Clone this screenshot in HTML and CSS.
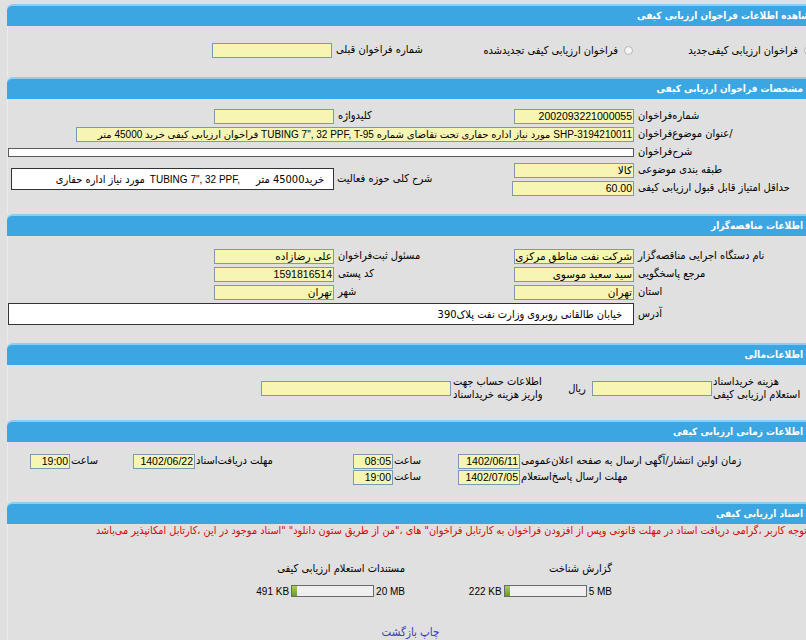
FILE: index.html
```html
<!DOCTYPE html>
<html lang="fa">
<head>
<meta charset="utf-8">
<title>مشاهده اطلاعات فراخوان ارزيابی کيفی</title>
<link rel="stylesheet" href="styles.css">
</head>
<body>
<div class="page">
  <div class="bar bar-main">مشاهده اطلاعات فراخوان ارزيابی کيفی</div>
  <div class="sec sec-top">
    <div class="top-row">
      <div class="opt"><span class="radio"></span><span>فراخوان ارزيابی کيفی‌جديد</span></div>
      <div class="mid">
        <div class="opt"><span class="radio"></span><span>فراخوان ارزيابی کيفی تجديدشده</span></div>
        <span class="lbl">شماره فراخوان قبلی</span>
      </div>
      <div class="cell"><div class="in w120"></div></div>
    </div>
  </div>

  <div class="bar">مشخصات فراخوان ارزيابی کيفی</div>
  <div class="sec sec-spec grid">
    <div class="lbl">شماره‌فراخوان</div>
    <div class="cell"><div class="in num w120">2002093221000055</div></div>
    <div class="lbl">کليدواژه</div>
    <div class="cell"><div class="in w120"></div></div>
    <div></div>

    <div class="lbl">/عنوان موضوع‌فراخوان</div>
    <div class="cell span"><div class="in wtitle">SHP-3194210011 مورد نياز اداره حفاری تحت تقاضای شماره TUBING 7", 32 PPF, T-95 فراخوان ارزيابی کيفی خريد 45000 متر</div></div>

    <div class="lbl">شرح‌فراخوان</div>
    <div class="cell span"><div class="thin"></div></div>

    <div class="lbl">طبقه بندی موضوعی</div>
    <div class="cell"><div class="in w120">کالا</div></div>
    <div class="lbl rs2">شرح کلی حوزه فعاليت</div>
    <div class="cell rs2 span2"><div class="box act"><span>خريد45000 متر</span><span class="latin" dir="ltr">TUBING 7", 32 PPF,</span><span>مورد نياز اداره حفاری</span></div></div>

    <div class="lbl">حداقل امتياز قابل قبول ارزيابی کيفی</div>
    <div class="cell"><div class="in num w122">60.00</div></div>
  </div>

  <div class="bar">اطلاعات مناقصه‌گزار</div>
  <div class="sec sec-org grid">
    <div class="lbl">نام دستگاه اجرايی مناقصه‌گزار</div>
    <div class="cell"><div class="in w120">شرکت نفت مناطق مرکزی</div></div>
    <div class="lbl">مسئول ثبت‌فراخوان</div>
    <div class="cell"><div class="in w120">علی رضازاده</div></div>
    <div></div>

    <div class="lbl">مرجع پاسخگويی</div>
    <div class="cell"><div class="in w120">سيد سعيد موسوی</div></div>
    <div class="lbl">کد پستی</div>
    <div class="cell"><div class="in num w120">1591816514</div></div>
    <div></div>

    <div class="lbl">استان</div>
    <div class="cell"><div class="in w120">تهران</div></div>
    <div class="lbl">شهر</div>
    <div class="cell"><div class="in w120">تهران</div></div>
    <div></div>

    <div class="lbl">آدرس</div>
    <div class="cell span"><div class="box addr">خيابان طالقانی روبروی وزارت نفت پلاک390</div></div>
  </div>

  <div class="bar">اطلاعات‌مالی</div>
  <div class="sec sec-fin">
    <div class="fin-row">
      <div class="lbl2 f1"><span>هزينه خريداسناد</span><span>استعلام ارزيابی کيفی</span></div>
      <div class="in wfee"></div>
      <div class="rial">ريال</div>
      <div class="lbl2 f2"><span>اطلاعات حساب جهت</span><span>واريز هزينه خريداسناد</span></div>
      <div class="in wacc"></div>
    </div>
  </div>

  <div class="bar">اطلاعات زمانی ارزيابی کيفی</div>
  <div class="sec sec-time tgrid">
    <div class="lbl">زمان اولين انتشار/آگهی ارسال به  صفحه اعلان‌عمومی</div>
    <div class="cell"><div class="in num wdate">1402/06/11</div></div>
    <div class="lbl">ساعت</div>
    <div class="cell"><div class="in num wtime">08:05</div></div>
    <div class="lbl">مهلت دريافت‌اسناد</div>
    <div class="cell"><div class="in num wdate">1402/06/22</div></div>
    <div class="lbl">ساعت</div>
    <div class="cell"><div class="in num wtime">19:00</div></div>
    <div></div>

    <div class="lbl">مهلت ارسال پاسخ‌استعلام</div>
    <div class="cell"><div class="in num wdate">1402/07/05</div></div>
    <div class="lbl">ساعت</div>
    <div class="cell"><div class="in num wtime">19:00</div></div>
    <div></div><div></div><div></div><div></div><div></div>
  </div>

  <div class="bar">اسناد ارزيابی کيفی</div>
  <div class="sec sec-docs">
    <p class="note">توجه کاربر ،گرامی دريافت اسناد در مهلت قانونی وپس از افزودن فراخوان به کارتابل فراخوان" های ،"من از طريق ستون دانلود" "اسناد موجود در اين ،کارتابل امکانپذير می‌باشد</p>
    <div class="docs">
      <div class="doc">
        <div class="doc-title">گزارش شناخت</div>
        <div class="quota"><span dir="ltr">5 MB</span><span class="meter"><span class="fill"></span></span><span dir="ltr">222 KB</span></div>
      </div>
      <div class="doc">
        <div class="doc-title">مستندات استعلام ارزيابی کيفی</div>
        <div class="quota"><span dir="ltr">20 MB</span><span class="meter"><span class="fill"></span></span><span dir="ltr">491 KB</span></div>
      </div>
    </div>
    <div class="links"><a href="#">چاپ</a> <a href="#">بازگشت</a></div>
  </div>
</div>
</body>
</html>
```

FILE: styles.css
```css
html, body {
  margin: 0;
  padding: 0;
  background: #e0e0e0;
  overflow: hidden;
}
body {
  font-family: "DejaVu Sans Condensed", "DejaVu Sans", sans-serif;
  font-stretch: condensed;
  font-size: 11px;
  color: #000;
}
.page {
  margin: 4px 0 0 7px;
  width: 806px;
  direction: rtl;
}
.bar {
  height: 20px;
  line-height: 20px;
  background: #3ba6e2;
  border-top: 2px solid #8bcdf3;
  border-radius: 6px 6px 0 0;
  color: #fff;
  font-weight: bold;
  font-size: 10px;
  text-align: right;
  padding-right: 10px;
}
.bar-main { padding-right: 3px; margin-right: -6px; font-size: 10px; }
.sec { border-left: 1px solid #ebebeb; }

.lbl {
  text-align: left;
  padding-left: 4px;
  white-space: nowrap;
  line-height: 18px;
}
.in {
  box-sizing: border-box;
  height: 15px;
  background: #f7f5b3;
  border: 1px solid #7c98b4;
  font-family: "Liberation Sans", "DejaVu Sans", sans-serif;
  font-stretch: normal;
  font-size: 10.5px;
  line-height: 13px;
  padding: 0 1px;
  white-space: nowrap;
  overflow: hidden;
  text-align: right;
}
.w120 { width: 120px; }
.w122 { width: 122px; }
.wtitle { width: 558px; font-size: 10px; }
.wdate { width: 62px; }
.wtime { width: 40px; }
.wfee { width: 120px; }
.wacc { width: 190px; }

/* top */
.sec-top { padding: 15px 0 18px; }
.top-row {
  display: grid;
  grid-template-columns: 179px 302px 124px 1fr;
  height: 18px;
  align-items: center;
}
.opt { display: flex; align-items: center; gap: 4px; white-space: nowrap; }
.mid { display: flex; justify-content: space-between; align-items: center; padding-right: 1px; }
.mid .lbl { padding-left: 4px; }
.radio {
  flex: none;
  width: 9px; height: 9px; border-radius: 50%;
  border: 1px solid #b5b5b5; background: #f5f5f5;
  box-sizing: border-box; margin-left: 2px;
}

/* grids */
.grid {
  display: grid;
  grid-template-columns: 179px 122px 178px 124px 1fr;
  grid-auto-rows: 18px;
  align-items: center;
}
.cell { display: flex; align-items: center; }
.span { grid-column: 2 / -1; }
.span2 { grid-column: 4 / -1; }
.rs2 { grid-row: span 2; }
.lbl.rs2 { padding-left: 3px; }
.sec-spec { padding: 8px 0 17px; }
.sec-org { padding: 11px 0 16px; grid-template-rows: 18px 18px 18px 26px; }
.thin {
  box-sizing: border-box;
  width: 627px; height: 9px;
  background: #fff;
  border: 1px solid #5a5a5a;
}
.box {
  box-sizing: border-box;
  background: #fff;
  border: 1px solid #333;
  height: 22px;
  display: flex;
  align-items: center;
  white-space: nowrap;
  overflow: hidden;
}
.act { width: 323px; padding-right: 9px; }
.act span:nth-child(2) { margin-right: 16px; margin-left: 5px; }
.latin { font-family: "Liberation Sans", sans-serif; font-stretch: normal; font-size: 10px; }
.addr { width: 627px; padding-right: 11px; }

/* financial */
.sec-fin { padding: 9px 0 18px; }
.fin-row { display: flex; align-items: center; height: 28px; }
.lbl2 {
  display: flex;
  flex-direction: column;
  align-items: flex-end;
  line-height: 13px;
  white-space: nowrap;
  box-sizing: border-box;
}
.f1 { width: 101px; padding-left: 1px; }
.rial { width: 22px; text-align: center; margin-right: 4px; }
.f2 { width: 100px; margin-right: 15px; padding-left: 2px; }

/* time */
.tgrid {
  display: grid;
  grid-template-columns: 293px 64px 63px 41px 157px 62px 63px 42px 1fr;
  grid-auto-rows: 16px;
  align-items: center;
  padding: 11px 0 17px;
}
.tgrid .lbl { padding-left: 1px; line-height: 16px; }

/* docs */
.sec-docs { padding-bottom: 10px; }
.note {
  margin: 0 6px 0 0;
  padding: 0;
  color: #e00000;
  white-space: nowrap;
  line-height: 14px;
  font-size: 10.8px;
}
.docs { display: flex; padding-right: 201px; margin-top: 23px; }
.doc { width: 207px; }
.doc-title { line-height: 16px; }
.quota {
  display: flex; align-items: center; gap: 2px; margin-top: 8px;
  font-family: "Liberation Sans", "DejaVu Sans", sans-serif; font-stretch: normal; font-size: 10px;
}
.meter {
  display: flex; width: 83px; height: 12px; box-sizing: border-box;
  border: 1px solid #6a6a6a; background: #efefef; direction: ltr;
}
.fill { width: 5px; height: 100%; background: linear-gradient(#a8cf58, #6c9a20); }
.links { text-align: center; margin-top: 28px; }
.links a { color: #3b3bc9; text-decoration: none; font-size: 11.5px; }
```
